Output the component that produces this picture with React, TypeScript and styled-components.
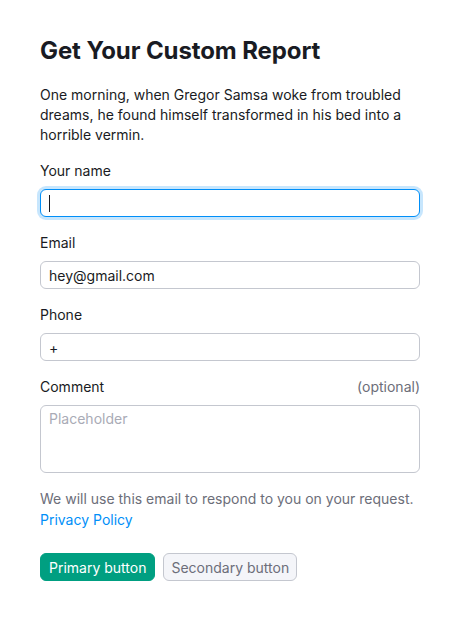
import React from "react";
import styled, { createGlobalStyle } from "styled-components";

const colors = {
  text: "#191b23",
  dim: "#6c6e79",
  border: "#c4c7cf",
  focus: "#008ff8",
  placeholder: "#a9abb6",
  green: "#009f81",
  light: "#f4f5f9",
};

const GlobalStyle = createGlobalStyle`
  body {
    margin: 0;
    background: #fff;
    font-family: Inter, "Noto Sans", sans-serif;
    color: ${colors.text};
  }
`;

const Page = styled.form`
  width: 380px;
  padding: 35px 40px 40px;
  display: flex;
  flex-direction: column;
`;

const Title = styled.h2`
  margin: 0 0 18px;
  font-size: 24px;
  line-height: 32px;
  font-weight: 700;
  letter-spacing: -0.1px;
`;

const Lead = styled.p`
  margin: 0 0 16px;
  font-size: 14px;
  line-height: 20px;
`;

const Fields = styled.div`
  display: flex;
  flex-direction: column;
  gap: 16px;
`;

const Field = styled.div`
  display: flex;
  flex-direction: column;
`;

const LabelRow = styled.div`
  display: flex;
  justify-content: space-between;
  font-size: 14px;
  line-height: 20px;
  margin-bottom: 8px;
`;

const Optional = styled.span`
  color: ${colors.dim};
`;

const InputWrap = styled.div`
  position: relative;
`;

const Input = styled.input<{ $focused?: boolean }>`
  box-sizing: border-box;
  width: 100%;
  height: 28px;
  padding: 0 8px;
  font: 14px Inter, sans-serif;
  color: ${colors.text};
  border-radius: 6px;
  outline: none;
  border: 1px solid ${(p) => (p.$focused ? colors.focus : colors.border)};
  box-shadow: ${(p) => (p.$focused ? "0 0 0 3px rgba(0, 143, 248, 0.22)" : "none")};
  caret-color: transparent;
  display: block;
`;

const Caret = styled.span`
  position: absolute;
  left: 9px;
  top: 6px;
  width: 1px;
  height: 17px;
  background: ${colors.text};
`;

const TextArea = styled.textarea`
  box-sizing: border-box;
  width: 100%;
  height: 68px;
  padding: 3px 8px;
  font: 14px/20px Inter, sans-serif;
  border: 1px solid ${colors.border};
  border-radius: 6px;
  resize: none;
  outline: none;
  display: block;
  &::placeholder {
    color: ${colors.placeholder};
  }
`;

const Note = styled.p`
  margin: 15px 0 23px;
  font-size: 14px;
  line-height: 21px;
  color: ${colors.dim};
  & a {
    color: ${colors.focus};
    text-decoration: none;
  }
`;

const Buttons = styled.div`
  display: flex;
  gap: 8px;
`;

const Button = styled.button<{ $primary?: boolean }>`
  height: 28px;
  padding: 0 ${(p) => (p.$primary ? "8px" : "7px")};
  font: 14px Inter, sans-serif;
  border-radius: 6px;
  cursor: pointer;
  color: ${(p) => (p.$primary ? "#fff" : colors.dim)};
  background: ${(p) => (p.$primary ? colors.green : colors.light)};
  border: 1px solid ${(p) => (p.$primary ? colors.green : colors.border)};
`;

const App = () => {
  return (
    <>
      <GlobalStyle />
      <Page onSubmit={(e) => e.preventDefault()}>
        <Title>Get Your Custom Report</Title>
        <Lead>
          One morning, when Gregor Samsa woke from troubled dreams, he found
          himself transformed in his bed into a horrible vermin.
        </Lead>
        <Fields>
          <Field>
            <LabelRow>Your name</LabelRow>
            <InputWrap>
              <Input $focused defaultValue="" />
              <Caret />
            </InputWrap>
          </Field>
          <Field>
            <LabelRow>Email</LabelRow>
            <Input defaultValue="hey@gmail.com" />
          </Field>
          <Field>
            <LabelRow>Phone</LabelRow>
            <Input defaultValue="+" />
          </Field>
          <Field>
            <LabelRow>
              <span>Comment</span>
              <Optional>(optional)</Optional>
            </LabelRow>
            <TextArea placeholder="Placeholder" />
          </Field>
        </Fields>
        <Note>
          We will use this email to respond to you on your request.
          <br />
          <a href="#">Privacy Policy</a>
        </Note>
        <Buttons>
          <Button $primary type="submit">Primary button</Button>
          <Button type="button">Secondary button</Button>
        </Buttons>
      </Page>
    </>
  );
};

export default App;
